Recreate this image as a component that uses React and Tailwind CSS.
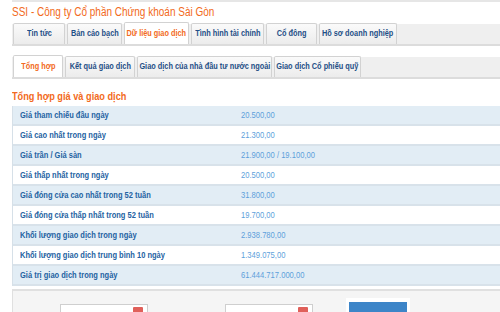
import React from 'react';

const mainTabs = [
  { label: 'Tin tức', w: 'w-[52px]' },
  { label: 'Bản cáo bạch', w: 'w-[55px]' },
  { label: 'Dữ liệu giao dịch', w: 'w-[65px]', active: true },
  { label: 'Tình hình tài chính', w: 'w-[73px]' },
  { label: 'Cổ đông', w: 'w-[51px]' },
  { label: 'Hồ sơ doanh nghiệp', w: 'w-[78px]' },
];

const subTabs = [
  { label: 'Tổng hợp', w: 'w-[50px]', active: true },
  { label: 'Kết quả giao dịch', w: 'w-[70px]' },
  { label: 'Giao dịch của nhà đầu tư nước ngoài', w: 'w-[135px]' },
  { label: 'Giao dịch Cổ phiếu quỹ', w: 'w-[87px]' },
];

const rows = [
  ['Giá tham chiếu đầu ngày', '20.500,00'],
  ['Giá cao nhất trong ngày', '21.300,00'],
  ['Giá trần / Giá sàn', '21.900,00 / 19.100,00'],
  ['Giá thấp nhất trong ngày', '20.500,00'],
  ['Giá đóng cửa cao nhất trong 52 tuần', '31.800,00'],
  ['Giá đóng cửa thấp nhất trong 52 tuần', '19.700,00'],
  ['Khối lượng giao dịch trong ngày', '2.938.780,00'],
  ['Khối lượng giao dịch trung bình 10 ngày', '1.349.075,00'],
  ['Giá trị giao dịch trong ngày', '61.444.717.000,00'],
];

// the site uses a narrow face; squeeze Arial-width text horizontally
function Narrow({ children, center }) {
  return (
    <span className={`inline-block whitespace-nowrap scale-x-[0.8] ${center ? 'origin-center' : 'origin-left'}`}>
      {children}
    </span>
  );
}

function TabBar({ tabs, className }) {
  return (
    <div className={`flex items-end gap-[2px] h-[22px] bg-[#efefef] border-b-2 border-[#dcdcdc] pl-px ${className}`}>
      {tabs.map((t) => (
        <div
          key={t.label}
          className={`${t.w} flex items-center justify-center rounded-t-[2px] border border-b-0 border-[#d2d2d2] text-[9.2px] font-bold ${
            t.active ? 'bg-white text-[#f26a21] h-[22px]' : 'h-[21px] bg-gradient-to-b from-[#fafafa] to-[#ececec] text-[#1f4f86]'
          }`}
        >
          <Narrow center>{t.label}</Narrow>
        </div>
      ))}
    </div>
  );
}

function DateInput() {
  return (
    <div className="w-[88px] h-[14px] bg-white border border-[#cfcfcf] flex items-start justify-end pr-[4px] pt-[2px]">
      <div className="w-[10px] h-[8px] bg-[#e0605a] rounded-[1px]" />
    </div>
  );
}

export default function App() {
  return (
    <div
      className="w-[500px] h-[312px] overflow-hidden bg-white flex flex-col"
      style={{ fontFamily: "'Liberation Sans', Arial, sans-serif" }}
    >
      <div className="flex-1 pl-[12px]">
        <div className="h-[2px] bg-[#e6e6e6]" />
        <h1 className="mt-[3px] text-[12.5px] leading-[15px] text-[#f26a21]">
          <Narrow>SSI - Công ty Cổ phần Chứng khoán Sài Gòn</Narrow>
        </h1>
        <TabBar tabs={mainTabs} className="mt-[4px]" />
        <TabBar tabs={subTabs} className="mt-[11px]" />
        <div className="mt-[10px] text-[11.5px] leading-[15px] font-bold text-[#f26a21]">
          <Narrow>Tổng hợp giá và giao dịch</Narrow>
        </div>
        <div className="mt-[2px] border-l border-[#d6e0e8]">
          {rows.map(([label, value], i) => (
            <div
              key={label}
              className={`flex items-center h-[20px] border-b-2 border-[#d8e2ea] ${
                i % 2 === 0 ? 'bg-[#e2edf5]' : 'bg-white'
              }`}
            >
              <div className="w-[228px] pl-[7px] text-[9.4px] font-bold text-[#2362a2]">
                <Narrow>{label}</Narrow>
              </div>
              <div className="text-[9.5px] text-[#5d9fdb]">
                <Narrow>{value}</Narrow>
              </div>
            </div>
          ))}
        </div>
        <div className="mt-[3px] h-[40px] bg-[#f5f5f5] border-t-2 border-l border-[#e0e0e0] flex items-start">
          <div className="ml-[47px] mt-[13px]">
            <DateInput />
          </div>
          <div className="ml-[77px] mt-[13px]">
            <DateInput />
          </div>
          <div className="ml-[33px] mt-[7px] bg-white px-[3px] pt-[4px]">
            <div className="w-[58px] h-[20px] bg-[#3d85c8]" />
          </div>
        </div>
      </div>
      <div className="h-[2px] bg-[#6b6e64]" />
    </div>
  );
}
